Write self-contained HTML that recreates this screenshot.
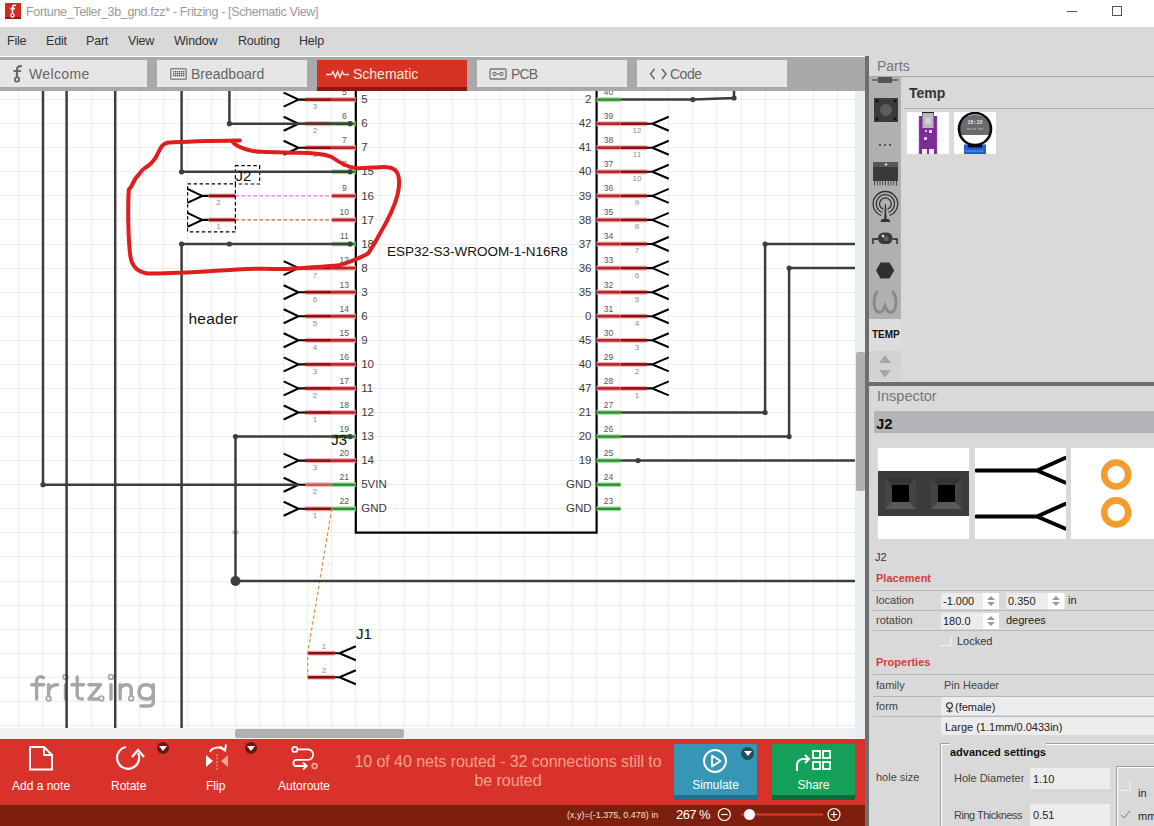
<!DOCTYPE html>
<html><head><meta charset="utf-8">
<style>
html,body{margin:0;padding:0;}
body{width:1154px;height:826px;overflow:hidden;position:relative;background:#fff;font-family:"Liberation Sans",sans-serif;}
.a{position:absolute;}
.t{position:absolute;white-space:nowrap;line-height:1;}
</style></head>
<body>
<!-- title bar -->
<div class="a" style="left:0;top:0;width:1154px;height:27px;background:#fff;"></div>
<div class="a" style="left:5px;top:3px;width:16px;height:16px;background:#d22a20;box-shadow:inset 0 -2px 0 #8e1a10;"></div>
<svg class="a" style="left:5px;top:3px" width="16" height="16" viewBox="0 0 16 16"><path d="M11 2.6C9.3 1.9 7.5 2.6 7.5 4.6V10.5M5.5 5.6H10" stroke="#fff" stroke-width="1.6" fill="none"/><circle cx="7.5" cy="12.4" r="1.6" stroke="#fff" stroke-width="1.3" fill="#5a0a06"/></svg>
<div class="t" style="left:26px;top:6px;font-size:12.5px;letter-spacing:-0.35px;color:#9a9a9a;">Fortune_Teller_3b_gnd.fzz* - Fritzing - [Schematic View]</div>
<div class="a" style="left:1067px;top:11px;width:10px;height:1px;background:#555;"></div>
<div class="a" style="left:1112px;top:6px;width:8px;height:8px;border:1px solid #555;"></div>

<!-- menu bar -->
<div class="a" style="left:0;top:27px;width:1154px;height:29px;background:#d9d9d9;"></div>
<div class="t" style="left:7px;top:35px;font-size:12.5px;letter-spacing:-0.2px;color:#333;">File</div>
<div class="t" style="left:46px;top:35px;font-size:12.5px;letter-spacing:-0.2px;color:#333;">Edit</div>
<div class="t" style="left:86px;top:35px;font-size:12.5px;letter-spacing:-0.2px;color:#333;">Part</div>
<div class="t" style="left:128px;top:35px;font-size:12.5px;letter-spacing:-0.2px;color:#333;">View</div>
<div class="t" style="left:174px;top:35px;font-size:12.5px;letter-spacing:-0.2px;color:#333;">Window</div>
<div class="t" style="left:238px;top:35px;font-size:12.5px;letter-spacing:-0.2px;color:#333;">Routing</div>
<div class="t" style="left:299px;top:35px;font-size:12.5px;letter-spacing:-0.2px;color:#333;">Help</div>

<!-- tab strip -->
<div class="a" style="left:0;top:56px;width:797px;height:1px;background:#fff;"></div>
<div class="a" style="left:0;top:57px;width:865px;height:34px;background:#a9a9a9;"></div>
<div class="a" style="left:0;top:60px;width:147px;height:27px;background:#e6e6e6;"></div>
<div class="a" style="left:157px;top:60px;width:150px;height:27px;background:#e6e6e6;"></div>
<div class="a" style="left:317px;top:60px;width:150px;height:27px;background:#d63324;"></div>
<div class="a" style="left:317px;top:87px;width:150px;height:4px;background:#8a1a0c;"></div>
<div class="a" style="left:477px;top:60px;width:150px;height:27px;background:#e6e6e6;"></div>
<div class="a" style="left:637px;top:60px;width:150px;height:27px;background:#e6e6e6;"></div>
<!-- tab icons -->
<svg class="a" style="left:10px;top:64px" width="16" height="20" viewBox="0 0 16 20"><path d="M12 2.5C9.5 1.5 7 2.5 7 5.5V13M3.5 7H11" stroke="#666" stroke-width="2.2" fill="none"/><circle cx="7" cy="15.5" r="2.2" stroke="#666" stroke-width="1.8" fill="none"/></svg>
<div class="t" style="left:29px;top:67px;font-size:14px;letter-spacing:0.35px;color:#666;">Welcome</div>
<svg class="a" style="left:170px;top:68px" width="17" height="12" viewBox="0 0 17 12"><rect x="0.8" y="0.8" width="15.4" height="10.4" rx="0.8" stroke="#8a8a8a" stroke-width="1.5" fill="#eee"/><rect x="3" y="3" width="1.4" height="1.4" fill="#555"/><rect x="5" y="3" width="1.4" height="1.4" fill="#555"/><rect x="7" y="3" width="1.4" height="1.4" fill="#555"/><rect x="9" y="3" width="1.4" height="1.4" fill="#555"/><rect x="11" y="3" width="1.4" height="1.4" fill="#555"/><rect x="13" y="3" width="1.4" height="1.4" fill="#555"/><rect x="3" y="5" width="1.4" height="1.4" fill="#555"/><rect x="5" y="5" width="1.4" height="1.4" fill="#555"/><rect x="7" y="5" width="1.4" height="1.4" fill="#555"/><rect x="9" y="5" width="1.4" height="1.4" fill="#555"/><rect x="11" y="5" width="1.4" height="1.4" fill="#555"/><rect x="13" y="5" width="1.4" height="1.4" fill="#555"/><rect x="3" y="7" width="1.4" height="1.4" fill="#555"/><rect x="5" y="7" width="1.4" height="1.4" fill="#555"/><rect x="7" y="7" width="1.4" height="1.4" fill="#555"/><rect x="9" y="7" width="1.4" height="1.4" fill="#555"/><rect x="11" y="7" width="1.4" height="1.4" fill="#555"/><rect x="13" y="7" width="1.4" height="1.4" fill="#555"/></svg>
<div class="t" style="left:191px;top:67px;font-size:14px;color:#666;">Breadboard</div>
<svg class="a" style="left:326px;top:68px" width="23" height="11" viewBox="0 0 23 11"><path d="M0 6.5H5.5L7 3.5L9.3 9.5L11.6 3.5L13.9 9.5L16.2 3.5L17.7 6.5H23" stroke="#fde2d9" stroke-width="1.4" fill="none"/></svg>
<div class="t" style="left:353px;top:67px;font-size:14px;color:#fde6df;">Schematic</div>
<svg class="a" style="left:489px;top:68px" width="18" height="12" viewBox="0 0 18 12"><rect x="1" y="1" width="16" height="10" rx="1" stroke="#777" stroke-width="1.3" fill="none"/><circle cx="5.5" cy="6" r="1.6" stroke="#777" stroke-width="1.1" fill="none"/><circle cx="12.5" cy="6" r="1.6" stroke="#777" stroke-width="1.1" fill="none"/><path d="M7 6H11" stroke="#777" stroke-width="1.1"/></svg>
<div class="t" style="left:511px;top:67px;font-size:14px;letter-spacing:-0.9px;color:#666;">PCB</div>
<svg class="a" style="left:649px;top:67px" width="20" height="14" viewBox="0 0 20 14"><path d="M5.5 2L1.5 7L5.5 12M13 2L17 7L13 12" stroke="#666" stroke-width="1.5" fill="none"/></svg>
<div class="t" style="left:670px;top:67px;font-size:14px;letter-spacing:-0.5px;color:#666;">Code</div>

<!-- canvas -->
<div class="a" style="left:0;top:91px;width:855px;height:638px;background:#fff;"></div>
<svg class="a" style="left:0;top:0;" width="865" height="740" viewBox="0 0 865 740" font-family="Liberation Sans, sans-serif">
<defs><clipPath id="cc"><rect x="0" y="91" width="855" height="638"/></clipPath></defs>
<g clip-path="url(#cc)">
<path d="M18.5 91V729 M42.5 91V729 M67.5 91V729 M91.5 91V729 M115.5 91V729 M139.5 91V729 M163.5 91V729 M187.5 91V729 M211.5 91V729 M235.5 91V729 M259.5 91V729 M283.5 91V729 M307.5 91V729 M331.5 91V729 M355.5 91V729 M379.5 91V729 M404.5 91V729 M428.5 91V729 M452.5 91V729 M476.5 91V729 M500.5 91V729 M524.5 91V729 M548.5 91V729 M572.5 91V729 M596.5 91V729 M620.5 91V729 M644.5 91V729 M668.5 91V729 M692.5 91V729 M716.5 91V729 M741.5 91V729 M765.5 91V729 M789.5 91V729 M813.5 91V729 M837.5 91V729 M0 99.5H855 M0 123.5H855 M0 147.5H855 M0 171.5H855 M0 195.5H855 M0 219.5H855 M0 244.5H855 M0 268.5H855 M0 292.5H855 M0 316.5H855 M0 340.5H855 M0 364.5H855 M0 388.5H855 M0 412.5H855 M0 436.5H855 M0 460.5H855 M0 484.5H855 M0 508.5H855 M0 532.5H855 M0 556.5H855 M0 581.5H855 M0 605.5H855 M0 629.5H855 M0 653.5H855 M0 677.5H855 M0 701.5H855 M0 725.5H855" stroke="#eeeeee" stroke-width="1" fill="none"/>
<path d="M355.8 91V532.7H596.6V91" stroke="#000" stroke-width="2.2" fill="none"/>
<path d="M283.7 92.6L298.5 99.6L283.7 106.6M298.5 99.6H305.0" stroke="#000" stroke-width="2.1" fill="none"/>
<path d="M305.0 99.6H331.8" stroke="#f6b0b0" stroke-width="5"/>
<path d="M305.0 99.6H331.8" stroke="#8a0c10" stroke-width="2.6"/>
<path d="M331.8 99.6H355.8" stroke="#f6b0b0" stroke-width="5"/>
<path d="M331.8 99.6H355.8" stroke="#b3262b" stroke-width="2.6"/>
<path d="M283.7 116.7L298.5 123.7L283.7 130.7M298.5 123.7H305.0" stroke="#000" stroke-width="2.1" fill="none"/>
<path d="M305.0 123.7H331.8" stroke="#f6b0b0" stroke-width="5"/>
<path d="M305.0 123.7H331.8" stroke="#8a0c10" stroke-width="2.6"/>
<path d="M331.8 123.7H355.8" stroke="#a2e2a2" stroke-width="4.8"/>
<path d="M331.8 123.7H355.8" stroke="#2f8f2f" stroke-width="2.4"/>
<path d="M283.7 140.7L298.5 147.7L283.7 154.7M298.5 147.7H305.0" stroke="#000" stroke-width="2.1" fill="none"/>
<path d="M305.0 147.7H331.8" stroke="#f6b0b0" stroke-width="5"/>
<path d="M305.0 147.7H331.8" stroke="#8a0c10" stroke-width="2.6"/>
<path d="M331.8 147.7H355.8" stroke="#f6b0b0" stroke-width="5"/>
<path d="M331.8 147.7H355.8" stroke="#b3262b" stroke-width="2.6"/>
<path d="M331.8 171.8H355.8" stroke="#a2e2a2" stroke-width="4.8"/>
<path d="M331.8 171.8H355.8" stroke="#2f8f2f" stroke-width="2.4"/>
<path d="M331.8 195.9H355.8" stroke="#f6b0b0" stroke-width="5"/>
<path d="M331.8 195.9H355.8" stroke="#b3262b" stroke-width="2.6"/>
<path d="M331.8 219.9H355.8" stroke="#f6b0b0" stroke-width="5"/>
<path d="M331.8 219.9H355.8" stroke="#b3262b" stroke-width="2.6"/>
<path d="M331.8 244.0H355.8" stroke="#a2e2a2" stroke-width="4.8"/>
<path d="M331.8 244.0H355.8" stroke="#2f8f2f" stroke-width="2.4"/>
<path d="M283.7 261.1L298.5 268.1L283.7 275.1M298.5 268.1H305.0" stroke="#000" stroke-width="2.1" fill="none"/>
<path d="M305.0 268.1H331.8" stroke="#f6b0b0" stroke-width="5"/>
<path d="M305.0 268.1H331.8" stroke="#8a0c10" stroke-width="2.6"/>
<path d="M331.8 268.1H355.8" stroke="#f6b0b0" stroke-width="5"/>
<path d="M331.8 268.1H355.8" stroke="#b3262b" stroke-width="2.6"/>
<path d="M283.7 285.2L298.5 292.2L283.7 299.2M298.5 292.2H305.0" stroke="#000" stroke-width="2.1" fill="none"/>
<path d="M305.0 292.2H331.8" stroke="#f6b0b0" stroke-width="5"/>
<path d="M305.0 292.2H331.8" stroke="#8a0c10" stroke-width="2.6"/>
<path d="M331.8 292.2H355.8" stroke="#f6b0b0" stroke-width="5"/>
<path d="M331.8 292.2H355.8" stroke="#b3262b" stroke-width="2.6"/>
<path d="M283.7 309.2L298.5 316.2L283.7 323.2M298.5 316.2H305.0" stroke="#000" stroke-width="2.1" fill="none"/>
<path d="M305.0 316.2H331.8" stroke="#f6b0b0" stroke-width="5"/>
<path d="M305.0 316.2H331.8" stroke="#8a0c10" stroke-width="2.6"/>
<path d="M331.8 316.2H355.8" stroke="#f6b0b0" stroke-width="5"/>
<path d="M331.8 316.2H355.8" stroke="#b3262b" stroke-width="2.6"/>
<path d="M283.7 333.3L298.5 340.3L283.7 347.3M298.5 340.3H305.0" stroke="#000" stroke-width="2.1" fill="none"/>
<path d="M305.0 340.3H331.8" stroke="#f6b0b0" stroke-width="5"/>
<path d="M305.0 340.3H331.8" stroke="#8a0c10" stroke-width="2.6"/>
<path d="M331.8 340.3H355.8" stroke="#f6b0b0" stroke-width="5"/>
<path d="M331.8 340.3H355.8" stroke="#b3262b" stroke-width="2.6"/>
<path d="M283.7 357.4L298.5 364.4L283.7 371.4M298.5 364.4H305.0" stroke="#000" stroke-width="2.1" fill="none"/>
<path d="M305.0 364.4H331.8" stroke="#f6b0b0" stroke-width="5"/>
<path d="M305.0 364.4H331.8" stroke="#8a0c10" stroke-width="2.6"/>
<path d="M331.8 364.4H355.8" stroke="#f6b0b0" stroke-width="5"/>
<path d="M331.8 364.4H355.8" stroke="#b3262b" stroke-width="2.6"/>
<path d="M283.7 381.4L298.5 388.4L283.7 395.4M298.5 388.4H305.0" stroke="#000" stroke-width="2.1" fill="none"/>
<path d="M305.0 388.4H331.8" stroke="#f6b0b0" stroke-width="5"/>
<path d="M305.0 388.4H331.8" stroke="#8a0c10" stroke-width="2.6"/>
<path d="M331.8 388.4H355.8" stroke="#f6b0b0" stroke-width="5"/>
<path d="M331.8 388.4H355.8" stroke="#b3262b" stroke-width="2.6"/>
<path d="M283.7 405.5L298.5 412.5L283.7 419.5M298.5 412.5H305.0" stroke="#000" stroke-width="2.1" fill="none"/>
<path d="M305.0 412.5H331.8" stroke="#f6b0b0" stroke-width="5"/>
<path d="M305.0 412.5H331.8" stroke="#8a0c10" stroke-width="2.6"/>
<path d="M331.8 412.5H355.8" stroke="#f6b0b0" stroke-width="5"/>
<path d="M331.8 412.5H355.8" stroke="#b3262b" stroke-width="2.6"/>
<path d="M331.8 436.6H355.8" stroke="#a2e2a2" stroke-width="4.8"/>
<path d="M331.8 436.6H355.8" stroke="#2f8f2f" stroke-width="2.4"/>
<path d="M283.7 453.6L298.5 460.6L283.7 467.6M298.5 460.6H305.0" stroke="#000" stroke-width="2.1" fill="none"/>
<path d="M305.0 460.6H331.8" stroke="#f6b0b0" stroke-width="5"/>
<path d="M305.0 460.6H331.8" stroke="#8a0c10" stroke-width="2.6"/>
<path d="M331.8 460.6H355.8" stroke="#f6b0b0" stroke-width="5"/>
<path d="M331.8 460.6H355.8" stroke="#b3262b" stroke-width="2.6"/>
<path d="M283.7 477.7L298.5 484.7L283.7 491.7M298.5 484.7H305.0" stroke="#000" stroke-width="2.1" fill="none"/>
<path d="M305.0 484.7H331.8" stroke="#f2c4c4" stroke-width="5"/>
<path d="M305.0 484.7H331.8" stroke="#c85a5a" stroke-width="2.6"/>
<path d="M331.8 484.7H355.8" stroke="#a2e2a2" stroke-width="4.8"/>
<path d="M331.8 484.7H355.8" stroke="#2f8f2f" stroke-width="2.4"/>
<path d="M283.7 501.8L298.5 508.8L283.7 515.8M298.5 508.8H305.0" stroke="#000" stroke-width="2.1" fill="none"/>
<path d="M305.0 508.8H331.8" stroke="#f6b0b0" stroke-width="5"/>
<path d="M305.0 508.8H331.8" stroke="#8a0c10" stroke-width="2.6"/>
<path d="M331.8 508.8H355.8" stroke="#a2e2a2" stroke-width="4.8"/>
<path d="M331.8 508.8H355.8" stroke="#2f8f2f" stroke-width="2.4"/>
<path d="M596.6 99.6H620.6" stroke="#a2e2a2" stroke-width="4.8"/>
<path d="M596.6 99.6H620.6" stroke="#2f8f2f" stroke-width="2.4"/>
<path d="M668.8 116.7L652.3 123.7L668.8 130.7M652.3 123.7H646.3" stroke="#000" stroke-width="2.1" fill="none"/>
<path d="M620.6 123.7H647.0" stroke="#f6b0b0" stroke-width="5"/>
<path d="M620.6 123.7H647.0" stroke="#8a0c10" stroke-width="2.6"/>
<path d="M596.6 123.7H620.6" stroke="#f6b0b0" stroke-width="5"/>
<path d="M596.6 123.7H620.6" stroke="#b3262b" stroke-width="2.6"/>
<path d="M668.8 140.7L652.3 147.7L668.8 154.7M652.3 147.7H646.3" stroke="#000" stroke-width="2.1" fill="none"/>
<path d="M620.6 147.7H647.0" stroke="#f6b0b0" stroke-width="5"/>
<path d="M620.6 147.7H647.0" stroke="#8a0c10" stroke-width="2.6"/>
<path d="M596.6 147.7H620.6" stroke="#f6b0b0" stroke-width="5"/>
<path d="M596.6 147.7H620.6" stroke="#b3262b" stroke-width="2.6"/>
<path d="M668.8 164.8L652.3 171.8L668.8 178.8M652.3 171.8H646.3" stroke="#000" stroke-width="2.1" fill="none"/>
<path d="M620.6 171.8H647.0" stroke="#f6b0b0" stroke-width="5"/>
<path d="M620.6 171.8H647.0" stroke="#8a0c10" stroke-width="2.6"/>
<path d="M596.6 171.8H620.6" stroke="#f6b0b0" stroke-width="5"/>
<path d="M596.6 171.8H620.6" stroke="#b3262b" stroke-width="2.6"/>
<path d="M668.8 188.9L652.3 195.9L668.8 202.9M652.3 195.9H646.3" stroke="#000" stroke-width="2.1" fill="none"/>
<path d="M620.6 195.9H647.0" stroke="#f6b0b0" stroke-width="5"/>
<path d="M620.6 195.9H647.0" stroke="#8a0c10" stroke-width="2.6"/>
<path d="M596.6 195.9H620.6" stroke="#f6b0b0" stroke-width="5"/>
<path d="M596.6 195.9H620.6" stroke="#b3262b" stroke-width="2.6"/>
<path d="M668.8 212.9L652.3 219.9L668.8 226.9M652.3 219.9H646.3" stroke="#000" stroke-width="2.1" fill="none"/>
<path d="M620.6 219.9H647.0" stroke="#f6b0b0" stroke-width="5"/>
<path d="M620.6 219.9H647.0" stroke="#8a0c10" stroke-width="2.6"/>
<path d="M596.6 219.9H620.6" stroke="#f6b0b0" stroke-width="5"/>
<path d="M596.6 219.9H620.6" stroke="#b3262b" stroke-width="2.6"/>
<path d="M668.8 237.0L652.3 244.0L668.8 251.0M652.3 244.0H646.3" stroke="#000" stroke-width="2.1" fill="none"/>
<path d="M620.6 244.0H647.0" stroke="#f6b0b0" stroke-width="5"/>
<path d="M620.6 244.0H647.0" stroke="#8a0c10" stroke-width="2.6"/>
<path d="M596.6 244.0H620.6" stroke="#f6b0b0" stroke-width="5"/>
<path d="M596.6 244.0H620.6" stroke="#b3262b" stroke-width="2.6"/>
<path d="M668.8 261.1L652.3 268.1L668.8 275.1M652.3 268.1H646.3" stroke="#000" stroke-width="2.1" fill="none"/>
<path d="M620.6 268.1H647.0" stroke="#f6b0b0" stroke-width="5"/>
<path d="M620.6 268.1H647.0" stroke="#8a0c10" stroke-width="2.6"/>
<path d="M596.6 268.1H620.6" stroke="#f6b0b0" stroke-width="5"/>
<path d="M596.6 268.1H620.6" stroke="#b3262b" stroke-width="2.6"/>
<path d="M668.8 285.2L652.3 292.2L668.8 299.2M652.3 292.2H646.3" stroke="#000" stroke-width="2.1" fill="none"/>
<path d="M620.6 292.2H647.0" stroke="#f6b0b0" stroke-width="5"/>
<path d="M620.6 292.2H647.0" stroke="#8a0c10" stroke-width="2.6"/>
<path d="M596.6 292.2H620.6" stroke="#f6b0b0" stroke-width="5"/>
<path d="M596.6 292.2H620.6" stroke="#b3262b" stroke-width="2.6"/>
<path d="M668.8 309.2L652.3 316.2L668.8 323.2M652.3 316.2H646.3" stroke="#000" stroke-width="2.1" fill="none"/>
<path d="M620.6 316.2H647.0" stroke="#f6b0b0" stroke-width="5"/>
<path d="M620.6 316.2H647.0" stroke="#8a0c10" stroke-width="2.6"/>
<path d="M596.6 316.2H620.6" stroke="#f6b0b0" stroke-width="5"/>
<path d="M596.6 316.2H620.6" stroke="#b3262b" stroke-width="2.6"/>
<path d="M668.8 333.3L652.3 340.3L668.8 347.3M652.3 340.3H646.3" stroke="#000" stroke-width="2.1" fill="none"/>
<path d="M620.6 340.3H647.0" stroke="#f6b0b0" stroke-width="5"/>
<path d="M620.6 340.3H647.0" stroke="#8a0c10" stroke-width="2.6"/>
<path d="M596.6 340.3H620.6" stroke="#f6b0b0" stroke-width="5"/>
<path d="M596.6 340.3H620.6" stroke="#b3262b" stroke-width="2.6"/>
<path d="M668.8 357.4L652.3 364.4L668.8 371.4M652.3 364.4H646.3" stroke="#000" stroke-width="2.1" fill="none"/>
<path d="M620.6 364.4H647.0" stroke="#f6b0b0" stroke-width="5"/>
<path d="M620.6 364.4H647.0" stroke="#8a0c10" stroke-width="2.6"/>
<path d="M596.6 364.4H620.6" stroke="#f6b0b0" stroke-width="5"/>
<path d="M596.6 364.4H620.6" stroke="#b3262b" stroke-width="2.6"/>
<path d="M668.8 381.4L652.3 388.4L668.8 395.4M652.3 388.4H646.3" stroke="#000" stroke-width="2.1" fill="none"/>
<path d="M620.6 388.4H647.0" stroke="#f6b0b0" stroke-width="5"/>
<path d="M620.6 388.4H647.0" stroke="#8a0c10" stroke-width="2.6"/>
<path d="M596.6 388.4H620.6" stroke="#f6b0b0" stroke-width="5"/>
<path d="M596.6 388.4H620.6" stroke="#b3262b" stroke-width="2.6"/>
<path d="M596.6 412.5H620.6" stroke="#a2e2a2" stroke-width="4.8"/>
<path d="M596.6 412.5H620.6" stroke="#2f8f2f" stroke-width="2.4"/>
<path d="M596.6 436.6H620.6" stroke="#a2e2a2" stroke-width="4.8"/>
<path d="M596.6 436.6H620.6" stroke="#2f8f2f" stroke-width="2.4"/>
<path d="M596.6 460.6H620.6" stroke="#a2e2a2" stroke-width="4.8"/>
<path d="M596.6 460.6H620.6" stroke="#2f8f2f" stroke-width="2.4"/>
<path d="M596.6 484.7H620.6" stroke="#a2e2a2" stroke-width="4.8"/>
<path d="M596.6 484.7H620.6" stroke="#2f8f2f" stroke-width="2.4"/>
<path d="M596.6 508.8H620.6" stroke="#a2e2a2" stroke-width="4.8"/>
<path d="M596.6 508.8H620.6" stroke="#2f8f2f" stroke-width="2.4"/>
<path d="M187.4 188.9L202.2 195.9L187.4 202.9M202.2 195.9H208.7" stroke="#000" stroke-width="2.1" fill="none"/>
<path d="M208.7 195.9H235.5" stroke="#f6b0b0" stroke-width="5"/>
<path d="M208.7 195.9H235.5" stroke="#8a0c10" stroke-width="2.6"/>
<path d="M187.4 212.9L202.2 219.9L187.4 226.9M202.2 219.9H208.7" stroke="#000" stroke-width="2.1" fill="none"/>
<path d="M208.7 219.9H235.5" stroke="#f6b0b0" stroke-width="5"/>
<path d="M208.7 219.9H235.5" stroke="#8a0c10" stroke-width="2.6"/>
<path d="M355.9 646.2L339.4 653.2L355.9 660.2M339.4 653.2H333.4" stroke="#000" stroke-width="2.1" fill="none"/>
<path d="M307.7 653.2H334.8" stroke="#f6b0b0" stroke-width="5"/>
<path d="M307.7 653.2H334.8" stroke="#8a0c10" stroke-width="2.6"/>
<path d="M355.9 670.3L339.4 677.3L355.9 684.3M339.4 677.3H333.4" stroke="#000" stroke-width="2.1" fill="none"/>
<path d="M307.7 677.3H334.8" stroke="#f6b0b0" stroke-width="5"/>
<path d="M307.7 677.3H334.8" stroke="#8a0c10" stroke-width="2.6"/>
<path d="M235.5 195.9H331.8" stroke="#d67ee6" stroke-width="1.2" stroke-dasharray="3.5 2.5"/>
<path d="M235.5 219.9H331.8" stroke="#b0703a" stroke-width="1.2" stroke-dasharray="3.5 2.5"/>
<path d="M331.8 508.8L307.7 653.2V677.3" stroke="#f08a2a" stroke-width="1.2" stroke-dasharray="3.5 2.5" fill="none"/>
<path d="M232.5 532.5H238.5" stroke="#7ad87a" stroke-width="3" opacity="0.9"/>
<rect x="187.6" y="183.8" width="47.8" height="48.1" fill="none" stroke="#000" stroke-width="1.2" stroke-dasharray="3.4 2.6"/>
<rect x="235.4" y="165.7" width="24.2" height="18.3" fill="none" stroke="#000" stroke-width="1.2" stroke-dasharray="3.4 2.6"/>
<path d="M43.5 677.5C40 676 36.6 677 36.6 681V699M31.7 684.7H44 M48.6 684.7V696.2M48.6 691C49.5 686.5 53 684.7 57.7 684.7 M65.5 684.7V699 M77.2 677V695C77.2 698 78.5 699 82.4 699M72 684.7H83.7 M88.9 684.7H100.6L88.9 699H99 M111 684.7V699 M120.1 684.7V699M120.1 689.5C121 686 124 684.7 126.5 684.7C129.5 684.7 131.2 686.5 131.2 690V696.2 M153.3 684.7V702C153.3 705 151.5 706 148 706H141 M153.3 690C152.5 686 150 684.7 146.5 684.7C141.5 684.7 139 687.5 139 692C139 696.5 141.5 699 146.5 699C150 699 152.5 697.5 153.3 694" stroke="#a6a6a6" stroke-width="3.4" fill="none" stroke-linecap="round" stroke-linejoin="round"/>
<circle cx="48.6" cy="698.6" r="2.3" stroke="#a8a8a8" stroke-width="1.8" fill="#fff"/>
<circle cx="65.5" cy="676.9" r="2.3" stroke="#a8a8a8" stroke-width="1.8" fill="#fff"/>
<circle cx="101.3" cy="698.4" r="2.3" stroke="#a8a8a8" stroke-width="1.8" fill="#fff"/>
<circle cx="111" cy="676.9" r="2.3" stroke="#a8a8a8" stroke-width="1.8" fill="#fff"/>
<circle cx="131.2" cy="698.4" r="2.3" stroke="#a8a8a8" stroke-width="1.8" fill="#fff"/>
<path d="M43.0 91V484.7H299" stroke="#3d3d3d" stroke-width="2.5" fill="none" stroke-linecap="butt"/>
<circle cx="43.0" cy="484.7" r="2.6" fill="#3d3d3d"/>
<path d="M66.6 91V729" stroke="#3d3d3d" stroke-width="2.5" fill="none" stroke-linecap="butt"/>
<path d="M115.2 91V729" stroke="#3d3d3d" stroke-width="2.5" fill="none" stroke-linecap="butt"/>
<path d="M181.6 91V171.8H350" stroke="#3d3d3d" stroke-width="2.5" fill="none" stroke-linecap="butt"/>
<circle cx="181.6" cy="171.8" r="2.6" fill="#3d3d3d"/>
<circle cx="350.0" cy="171.8" r="2.6" fill="#3d3d3d"/>
<path d="M181.6 729V244.0H350" stroke="#3d3d3d" stroke-width="2.5" fill="none" stroke-linecap="butt"/>
<circle cx="181.6" cy="244.0" r="2.6" fill="#3d3d3d"/>
<circle cx="229.4" cy="244.0" r="2.6" fill="#3d3d3d"/>
<circle cx="350.0" cy="244.0" r="2.6" fill="#3d3d3d"/>
<path d="M229.4 91V123.7H350" stroke="#3d3d3d" stroke-width="2.5" fill="none" stroke-linecap="butt"/>
<circle cx="229.4" cy="123.7" r="2.6" fill="#3d3d3d"/>
<circle cx="350.0" cy="123.7" r="2.6" fill="#3d3d3d"/>
<path d="M235.5 436.6H350" stroke="#3d3d3d" stroke-width="2.5" fill="none" stroke-linecap="butt"/>
<circle cx="235.5" cy="436.6" r="2.6" fill="#3d3d3d"/>
<circle cx="350.0" cy="436.6" r="2.6" fill="#3d3d3d"/>
<path d="M235.5 436.6V581.0H855" stroke="#3d3d3d" stroke-width="2.5" fill="none" stroke-linecap="butt"/>
<circle cx="235.5" cy="581.0" r="5" fill="#3d3d3d"/>
<path d="M620.6 99.6H692.9L734 98V91" stroke="#3d3d3d" stroke-width="2.5" fill="none" stroke-linecap="butt"/>
<circle cx="692.9" cy="99.6" r="2.6" fill="#3d3d3d"/>
<circle cx="734.0" cy="98.0" r="2.6" fill="#3d3d3d"/>
<path d="M620.6 412.5H765.1V244.0H855" stroke="#3d3d3d" stroke-width="2.5" fill="none" stroke-linecap="butt"/>
<circle cx="765.1" cy="412.5" r="2.6" fill="#3d3d3d"/>
<circle cx="765.1" cy="244.0" r="2.6" fill="#3d3d3d"/>
<path d="M620.6 436.6H789.1V268.1H855" stroke="#3d3d3d" stroke-width="2.5" fill="none" stroke-linecap="butt"/>
<circle cx="789.1" cy="436.6" r="2.6" fill="#3d3d3d"/>
<circle cx="789.1" cy="268.1" r="2.6" fill="#3d3d3d"/>
<path d="M620.6 460.6H855" stroke="#3d3d3d" stroke-width="2.5" fill="none" stroke-linecap="butt"/>
<circle cx="638.0" cy="460.6" r="2.6" fill="#3d3d3d"/>
<text x="361.2" y="103.2" font-size="11.5" fill="#3a3a3a" text-anchor="start" font-weight="normal" >5</text>
<text x="344.3" y="94.9" font-size="8.5" fill="#555" text-anchor="middle" font-weight="normal" >5</text>
<text x="315.0" y="109.0" font-size="8" fill="#8c8c8c" text-anchor="middle" font-weight="normal" >3</text>
<text x="361.2" y="127.3" font-size="11.5" fill="#3a3a3a" text-anchor="start" font-weight="normal" >6</text>
<text x="344.3" y="119.0" font-size="8.5" fill="#555" text-anchor="middle" font-weight="normal" >6</text>
<text x="315.0" y="133.1" font-size="8" fill="#8c8c8c" text-anchor="middle" font-weight="normal" >2</text>
<text x="361.2" y="151.3" font-size="11.5" fill="#3a3a3a" text-anchor="start" font-weight="normal" >7</text>
<text x="344.3" y="143.0" font-size="8.5" fill="#555" text-anchor="middle" font-weight="normal" >7</text>
<text x="315.0" y="157.1" font-size="8" fill="#8c8c8c" text-anchor="middle" font-weight="normal" >1</text>
<text x="361.2" y="175.4" font-size="11.5" fill="#3a3a3a" text-anchor="start" font-weight="normal" >15</text>
<text x="344.3" y="167.1" font-size="8.5" fill="#555" text-anchor="middle" font-weight="normal" >8</text>
<text x="361.2" y="199.5" font-size="11.5" fill="#3a3a3a" text-anchor="start" font-weight="normal" >16</text>
<text x="344.3" y="191.2" font-size="8.5" fill="#555" text-anchor="middle" font-weight="normal" >9</text>
<text x="361.2" y="223.5" font-size="11.5" fill="#3a3a3a" text-anchor="start" font-weight="normal" >17</text>
<text x="344.3" y="215.2" font-size="8.5" fill="#555" text-anchor="middle" font-weight="normal" >10</text>
<text x="361.2" y="247.6" font-size="11.5" fill="#3a3a3a" text-anchor="start" font-weight="normal" >18</text>
<text x="344.3" y="239.3" font-size="8.5" fill="#555" text-anchor="middle" font-weight="normal" >11</text>
<text x="361.2" y="271.7" font-size="11.5" fill="#3a3a3a" text-anchor="start" font-weight="normal" >8</text>
<text x="344.3" y="263.4" font-size="8.5" fill="#555" text-anchor="middle" font-weight="normal" >12</text>
<text x="315.0" y="277.5" font-size="8" fill="#8c8c8c" text-anchor="middle" font-weight="normal" >7</text>
<text x="361.2" y="295.8" font-size="11.5" fill="#3a3a3a" text-anchor="start" font-weight="normal" >3</text>
<text x="344.3" y="287.5" font-size="8.5" fill="#555" text-anchor="middle" font-weight="normal" >13</text>
<text x="315.0" y="301.6" font-size="8" fill="#8c8c8c" text-anchor="middle" font-weight="normal" >6</text>
<text x="361.2" y="319.8" font-size="11.5" fill="#3a3a3a" text-anchor="start" font-weight="normal" >6</text>
<text x="344.3" y="311.5" font-size="8.5" fill="#555" text-anchor="middle" font-weight="normal" >14</text>
<text x="315.0" y="325.6" font-size="8" fill="#8c8c8c" text-anchor="middle" font-weight="normal" >5</text>
<text x="361.2" y="343.9" font-size="11.5" fill="#3a3a3a" text-anchor="start" font-weight="normal" >9</text>
<text x="344.3" y="335.6" font-size="8.5" fill="#555" text-anchor="middle" font-weight="normal" >15</text>
<text x="315.0" y="349.7" font-size="8" fill="#8c8c8c" text-anchor="middle" font-weight="normal" >4</text>
<text x="361.2" y="368.0" font-size="11.5" fill="#3a3a3a" text-anchor="start" font-weight="normal" >10</text>
<text x="344.3" y="359.7" font-size="8.5" fill="#555" text-anchor="middle" font-weight="normal" >16</text>
<text x="315.0" y="373.8" font-size="8" fill="#8c8c8c" text-anchor="middle" font-weight="normal" >3</text>
<text x="361.2" y="392.0" font-size="11.5" fill="#3a3a3a" text-anchor="start" font-weight="normal" >11</text>
<text x="344.3" y="383.7" font-size="8.5" fill="#555" text-anchor="middle" font-weight="normal" >17</text>
<text x="315.0" y="397.8" font-size="8" fill="#8c8c8c" text-anchor="middle" font-weight="normal" >2</text>
<text x="361.2" y="416.1" font-size="11.5" fill="#3a3a3a" text-anchor="start" font-weight="normal" >12</text>
<text x="344.3" y="407.8" font-size="8.5" fill="#555" text-anchor="middle" font-weight="normal" >18</text>
<text x="315.0" y="421.9" font-size="8" fill="#8c8c8c" text-anchor="middle" font-weight="normal" >1</text>
<text x="361.2" y="440.2" font-size="11.5" fill="#3a3a3a" text-anchor="start" font-weight="normal" >13</text>
<text x="344.3" y="431.9" font-size="8.5" fill="#555" text-anchor="middle" font-weight="normal" >19</text>
<text x="361.2" y="464.2" font-size="11.5" fill="#3a3a3a" text-anchor="start" font-weight="normal" >14</text>
<text x="344.3" y="455.9" font-size="8.5" fill="#555" text-anchor="middle" font-weight="normal" >20</text>
<text x="315.0" y="470.0" font-size="8" fill="#8c8c8c" text-anchor="middle" font-weight="normal" >3</text>
<text x="361.2" y="488.3" font-size="11.5" fill="#3a3a3a" text-anchor="start" font-weight="normal" >5VIN</text>
<text x="344.3" y="480.0" font-size="8.5" fill="#555" text-anchor="middle" font-weight="normal" >21</text>
<text x="315.0" y="494.1" font-size="8" fill="#8c8c8c" text-anchor="middle" font-weight="normal" >2</text>
<text x="361.2" y="512.4" font-size="11.5" fill="#3a3a3a" text-anchor="start" font-weight="normal" >GND</text>
<text x="344.3" y="504.1" font-size="8.5" fill="#555" text-anchor="middle" font-weight="normal" >22</text>
<text x="315.0" y="518.2" font-size="8" fill="#8c8c8c" text-anchor="middle" font-weight="normal" >1</text>
<text x="591.5" y="103.2" font-size="11.5" fill="#3a3a3a" text-anchor="end" font-weight="normal" >2</text>
<text x="608.5" y="94.9" font-size="8.5" fill="#555" text-anchor="middle" font-weight="normal" >40</text>
<text x="591.5" y="127.3" font-size="11.5" fill="#3a3a3a" text-anchor="end" font-weight="normal" >42</text>
<text x="608.5" y="119.0" font-size="8.5" fill="#555" text-anchor="middle" font-weight="normal" >39</text>
<text x="637.0" y="133.1" font-size="8" fill="#8c8c8c" text-anchor="middle" font-weight="normal" >12</text>
<text x="591.5" y="151.3" font-size="11.5" fill="#3a3a3a" text-anchor="end" font-weight="normal" >41</text>
<text x="608.5" y="143.0" font-size="8.5" fill="#555" text-anchor="middle" font-weight="normal" >38</text>
<text x="637.0" y="157.1" font-size="8" fill="#8c8c8c" text-anchor="middle" font-weight="normal" >11</text>
<text x="591.5" y="175.4" font-size="11.5" fill="#3a3a3a" text-anchor="end" font-weight="normal" >40</text>
<text x="608.5" y="167.1" font-size="8.5" fill="#555" text-anchor="middle" font-weight="normal" >37</text>
<text x="637.0" y="181.2" font-size="8" fill="#8c8c8c" text-anchor="middle" font-weight="normal" >10</text>
<text x="591.5" y="199.5" font-size="11.5" fill="#3a3a3a" text-anchor="end" font-weight="normal" >39</text>
<text x="608.5" y="191.2" font-size="8.5" fill="#555" text-anchor="middle" font-weight="normal" >36</text>
<text x="637.0" y="205.3" font-size="8" fill="#8c8c8c" text-anchor="middle" font-weight="normal" >9</text>
<text x="591.5" y="223.5" font-size="11.5" fill="#3a3a3a" text-anchor="end" font-weight="normal" >38</text>
<text x="608.5" y="215.2" font-size="8.5" fill="#555" text-anchor="middle" font-weight="normal" >35</text>
<text x="637.0" y="229.3" font-size="8" fill="#8c8c8c" text-anchor="middle" font-weight="normal" >8</text>
<text x="591.5" y="247.6" font-size="11.5" fill="#3a3a3a" text-anchor="end" font-weight="normal" >37</text>
<text x="608.5" y="239.3" font-size="8.5" fill="#555" text-anchor="middle" font-weight="normal" >34</text>
<text x="637.0" y="253.4" font-size="8" fill="#8c8c8c" text-anchor="middle" font-weight="normal" >7</text>
<text x="591.5" y="271.7" font-size="11.5" fill="#3a3a3a" text-anchor="end" font-weight="normal" >36</text>
<text x="608.5" y="263.4" font-size="8.5" fill="#555" text-anchor="middle" font-weight="normal" >33</text>
<text x="637.0" y="277.5" font-size="8" fill="#8c8c8c" text-anchor="middle" font-weight="normal" >6</text>
<text x="591.5" y="295.8" font-size="11.5" fill="#3a3a3a" text-anchor="end" font-weight="normal" >35</text>
<text x="608.5" y="287.5" font-size="8.5" fill="#555" text-anchor="middle" font-weight="normal" >32</text>
<text x="637.0" y="301.6" font-size="8" fill="#8c8c8c" text-anchor="middle" font-weight="normal" >5</text>
<text x="591.5" y="319.8" font-size="11.5" fill="#3a3a3a" text-anchor="end" font-weight="normal" >0</text>
<text x="608.5" y="311.5" font-size="8.5" fill="#555" text-anchor="middle" font-weight="normal" >31</text>
<text x="637.0" y="325.6" font-size="8" fill="#8c8c8c" text-anchor="middle" font-weight="normal" >4</text>
<text x="591.5" y="343.9" font-size="11.5" fill="#3a3a3a" text-anchor="end" font-weight="normal" >45</text>
<text x="608.5" y="335.6" font-size="8.5" fill="#555" text-anchor="middle" font-weight="normal" >30</text>
<text x="637.0" y="349.7" font-size="8" fill="#8c8c8c" text-anchor="middle" font-weight="normal" >3</text>
<text x="591.5" y="368.0" font-size="11.5" fill="#3a3a3a" text-anchor="end" font-weight="normal" >40</text>
<text x="608.5" y="359.7" font-size="8.5" fill="#555" text-anchor="middle" font-weight="normal" >29</text>
<text x="637.0" y="373.8" font-size="8" fill="#8c8c8c" text-anchor="middle" font-weight="normal" >2</text>
<text x="591.5" y="392.0" font-size="11.5" fill="#3a3a3a" text-anchor="end" font-weight="normal" >47</text>
<text x="608.5" y="383.7" font-size="8.5" fill="#555" text-anchor="middle" font-weight="normal" >28</text>
<text x="637.0" y="397.8" font-size="8" fill="#8c8c8c" text-anchor="middle" font-weight="normal" >1</text>
<text x="591.5" y="416.1" font-size="11.5" fill="#3a3a3a" text-anchor="end" font-weight="normal" >21</text>
<text x="608.5" y="407.8" font-size="8.5" fill="#555" text-anchor="middle" font-weight="normal" >27</text>
<text x="591.5" y="440.2" font-size="11.5" fill="#3a3a3a" text-anchor="end" font-weight="normal" >20</text>
<text x="608.5" y="431.9" font-size="8.5" fill="#555" text-anchor="middle" font-weight="normal" >26</text>
<text x="591.5" y="464.2" font-size="11.5" fill="#3a3a3a" text-anchor="end" font-weight="normal" >19</text>
<text x="608.5" y="455.9" font-size="8.5" fill="#555" text-anchor="middle" font-weight="normal" >25</text>
<text x="591.5" y="488.3" font-size="11.5" fill="#3a3a3a" text-anchor="end" font-weight="normal" >GND</text>
<text x="608.5" y="480.0" font-size="8.5" fill="#555" text-anchor="middle" font-weight="normal" >24</text>
<text x="591.5" y="512.4" font-size="11.5" fill="#3a3a3a" text-anchor="end" font-weight="normal" >GND</text>
<text x="608.5" y="504.1" font-size="8.5" fill="#555" text-anchor="middle" font-weight="normal" >23</text>
<text x="218.4" y="205.3" font-size="8" fill="#8c8c8c" text-anchor="middle" font-weight="normal" >2</text>
<text x="218.4" y="229.3" font-size="8" fill="#8c8c8c" text-anchor="middle" font-weight="normal" >1</text>
<text x="324.0" y="648.7" font-size="8" fill="#8c8c8c" text-anchor="middle" font-weight="normal" >1</text>
<text x="324.0" y="672.8" font-size="8" fill="#8c8c8c" text-anchor="middle" font-weight="normal" >2</text>
<text x="235.5" y="181.2" font-size="15" fill="#111" text-anchor="start" font-weight="normal" >J2</text>
<text x="331.2" y="445.2" font-size="15" fill="#111" text-anchor="start" font-weight="normal" >J3</text>
<text x="356.0" y="638.5" font-size="15" fill="#111" text-anchor="start" font-weight="normal" >J1</text>
<text x="188.5" y="324.0" font-size="15.5" fill="#111" text-anchor="start" font-weight="normal" letter-spacing="0.25">header</text>
<text x="387.0" y="255.6" font-size="13.5" fill="#111" text-anchor="start" font-weight="normal" >ESP32-S3-WROOM-1-N16R8</text>
<path d="M239.9 140.5 C215 140.8 185 141.5 167.2 142.7 C161 144 160 150 156 157 C153 162 150 165 145 168 C142 169.5 141.5 171.5 140 173 C136 177 133.5 181 131.5 186 C130.5 188 129.5 188.5 128.8 189.5 C127.8 205 128 240 130.5 257 C132 266 138 272 147.2 273.5 C180 274 215 270.5 247 269 C265 268.5 280 269.2 288 268.9 C310 267.5 330 266.5 339 265.3 C350 262 360 258 368 253.5 C372 248 376 241 379 235.3 C388 220 395 205 397.5 195 C400 185 400 174 395 170 C390 166 382 167 379 167.2 C370 167.7 360 168.5 355.3 168.1 C347 167 340 163 331.7 157 C325 154 310 152.8 297.2 152.7 C285 152.4 270 152.2 261.7 151.8 C252 151.5 243 149 237 145.5 C233 143.5 232 141 233 140.5" stroke="#e11d1d" stroke-width="4" fill="none" stroke-linecap="round" stroke-linejoin="round"/>
</g>
</svg>
<!-- scrollbars -->
<div class="a" style="left:855px;top:91px;width:10px;height:648px;background:#e8edf0;"></div>
<div class="a" style="left:856px;top:352px;width:8.5px;height:139px;background:#b0b0b0;border-radius:2px;"></div>
<div class="a" style="left:0;top:728px;width:855px;height:11px;background:#eef2f4;"></div>
<div class="a" style="left:235px;top:729px;width:169px;height:9px;background:#b0b0b0;border-radius:2px;"></div>

<!-- bottom toolbar -->
<div class="a" style="left:0;top:739px;width:865px;height:66px;background:#d8322a;"></div>
<div class="a" style="left:0;top:805px;width:865px;height:21px;background:#7e1e0d;"></div>
<!-- add a note -->
<svg class="a" style="left:28px;top:745px" width="26" height="26" viewBox="0 0 26 26"><path d="M2 2H16L24 10V24.5H2Z M16 2V10H24" stroke="#fff" stroke-width="2" fill="none" stroke-linejoin="miter"/></svg>
<div class="t" style="left:12px;top:780px;font-size:12px;color:#fff;">Add a note</div>
<!-- rotate -->
<svg class="a" style="left:112px;top:744px" width="34" height="28" viewBox="0 0 34 28"><path d="M26 9A11 11 0 1 1 14 3" stroke="#fff" stroke-width="2.2" fill="none"/><path d="M20 13L26 6L32 13" stroke="#fff" stroke-width="2.2" fill="none"/></svg>
<div class="a" style="left:157px;top:742px;width:12px;height:12px;border-radius:6px;background:#6a1810;"></div>
<svg class="a" style="left:159px;top:746px" width="8" height="5" viewBox="0 0 8 5"><path d="M0 0H8L4 5Z" fill="#fff"/></svg>
<div class="t" style="left:111px;top:780px;font-size:12px;color:#fff;">Rotate</div>
<!-- flip -->
<svg class="a" style="left:203px;top:743px" width="30" height="30" viewBox="0 0 30 30"><path d="M3 12V24L10 18Z" fill="#fff"/><path d="M25 12V24L18 18Z" fill="#f4a090"/><path d="M14 11V27" stroke="#f4a090" stroke-width="1.2" stroke-dasharray="2 1.5"/><path d="M7 9C9 4 18 3 21 7" stroke="#fff" stroke-width="2" fill="none"/><path d="M17 3.5L22 7.5L23 1.5" stroke="#fff" stroke-width="2" fill="none"/></svg>
<div class="a" style="left:245px;top:742px;width:12px;height:12px;border-radius:6px;background:#6a1810;"></div>
<svg class="a" style="left:247px;top:746px" width="8" height="5" viewBox="0 0 8 5"><path d="M0 0H8L4 5Z" fill="#fff"/></svg>
<div class="t" style="left:206px;top:780px;font-size:12px;color:#fff;">Flip</div>
<!-- autoroute -->
<svg class="a" style="left:288px;top:744px" width="32" height="30" viewBox="288 744 32 30"><circle cx="294.8" cy="749.4" r="2.6" stroke="#fff" stroke-width="1.7" fill="none"/><path d="M297.4 749.4H308A5.2 5.2 0 0 1 308 759.8H296.5A3.1 3.1 0 0 0 296.5 766H306.5" stroke="#fff" stroke-width="1.8" fill="none"/><path d="M303 762.5L306.7 766L303 769.5" stroke="#fff" stroke-width="1.8" fill="none"/><circle cx="314.6" cy="766" r="2.4" stroke="#f4a090" stroke-width="1.7" fill="none"/></svg>
<div class="t" style="left:278px;top:780px;font-size:12px;color:#fff;">Autoroute</div>
<!-- status message -->
<div class="t" style="left:308px;top:752px;width:400px;text-align:center;font-size:16px;line-height:19px;letter-spacing:-0.05px;color:#f5a08e;">10 of 40 nets routed - 32 connections still to<br>be routed</div>
<!-- simulate -->
<div class="a" style="left:674px;top:744px;width:83px;height:55px;background:#3597b5;"></div>
<div class="a" style="left:674px;top:795px;width:83px;height:4.5px;background:#24708c;"></div>
<svg class="a" style="left:702px;top:748px" width="26" height="26" viewBox="0 0 26 26"><circle cx="13" cy="13" r="11" stroke="#fff" stroke-width="2" fill="none"/><path d="M10 7.5V18.5L18.5 13Z" stroke="#fff" stroke-width="1.8" fill="none" stroke-linejoin="round"/></svg>
<div class="a" style="left:741px;top:747px;width:13px;height:13px;border-radius:7px;background:#1f4f5e;"></div>
<svg class="a" style="left:743.5px;top:751px" width="8" height="5" viewBox="0 0 8 5"><path d="M0 0H8L4 5Z" fill="#fff"/></svg>
<div class="t" style="left:674px;top:779px;width:83px;text-align:center;font-size:12px;color:#fff;">Simulate</div>
<!-- share -->
<div class="a" style="left:772px;top:744px;width:83px;height:55px;background:#16a15a;"></div>
<div class="a" style="left:772px;top:795px;width:83px;height:4.5px;background:#0c6c3a;"></div>
<svg class="a" style="left:794px;top:749px" width="38" height="24" viewBox="0 0 38 24"><path d="M3 22V16A6 6 0 0 1 9 10H14" stroke="#fff" stroke-width="2" fill="none"/><path d="M11 6L15 10L11 14" stroke="#fff" stroke-width="2" fill="none"/><rect x="19" y="2" width="7" height="7" stroke="#fff" stroke-width="1.8" fill="none"/><rect x="29" y="2" width="7" height="7" stroke="#fff" stroke-width="1.8" fill="none"/><rect x="19" y="13" width="7" height="7" stroke="#fff" stroke-width="1.8" fill="none"/><rect x="29" y="13" width="7" height="7" stroke="#fff" stroke-width="1.8" fill="none"/></svg>
<div class="t" style="left:772px;top:779px;width:83px;text-align:center;font-size:12px;color:#fff;">Share</div>
<!-- status bar -->
<div class="t" style="left:567px;top:811px;font-size:9px;color:#f4e0da;">(x,y)=(-1.375, 0.478) in</div>
<div class="t" style="left:676px;top:808px;font-size:13px;letter-spacing:-0.6px;color:#fff;">267 %</div>
<svg class="a" style="left:716px;top:806px" width="125" height="17" viewBox="0 0 125 17"><circle cx="8.3" cy="8.5" r="6" stroke="#fff" stroke-width="1.2" fill="none"/><path d="M5 8.5H11.6" stroke="#fff" stroke-width="1.2"/><path d="M25 8.5H107" stroke="#dc3a2a" stroke-width="2"/><circle cx="33.5" cy="8.5" r="5.5" fill="#fff"/><circle cx="118" cy="8.5" r="6" stroke="#fff" stroke-width="1.2" fill="none"/><path d="M114.7 8.5H121.3M118 5.2V11.8" stroke="#fff" stroke-width="1.2"/></svg>

<!-- right panel -->
<div class="a" style="left:865px;top:56px;width:4px;height:770px;background:#6e6e6e;"></div>
<div class="a" style="left:869px;top:56px;width:285px;height:326px;background:#d9d9d9;"></div>
<div class="t" style="left:877px;top:59px;font-size:14px;color:#777;">Parts</div>
<div class="a" style="left:869px;top:76px;width:285px;height:1px;background:#a8a8a8;"></div>
<div class="a" style="left:869px;top:77px;width:32px;height:242px;background:#b0b0b0;"></div>
<div class="a" style="left:869px;top:319px;width:32px;height:31px;background:#dddddd;"></div>
<div class="t" style="left:872px;top:330px;font-size:10px;font-weight:bold;color:#111;">TEMP</div>
<div class="a" style="left:869px;top:351px;width:32px;height:15px;background:#d2d2d2;"></div><div class="a" style="left:869px;top:366px;width:32px;height:15px;background:#d4d4d4;"></div>
<svg class="a" style="left:876px;top:353px" width="18" height="26" viewBox="0 0 18 26"><path d="M3 10L9 2L15 10Z M3 17L9 24.5L15 17Z" fill="#a6a6a6"/></svg>
<!-- sidebar icons -->
<svg class="a" style="left:869px;top:77px" width="32" height="242" viewBox="0 0 32 242">
<path d="M3 3H29" stroke="#444" stroke-width="1.2"/><rect x="9" y="0" width="14" height="6" fill="#555"/>
<rect x="5" y="21" width="24" height="24" fill="#3a3a3a"/><circle cx="17" cy="33" r="6" fill="#5c5c5c"/><circle cx="8" cy="24" r="1.4" fill="#111"/><circle cx="26" cy="24" r="1.4" fill="#111"/><circle cx="8" cy="42" r="1.4" fill="#111"/><circle cx="26" cy="42" r="1.4" fill="#111"/>
<circle cx="11" cy="68" r="1" fill="#333"/><circle cx="16" cy="68" r="1" fill="#333"/><circle cx="21" cy="68" r="1" fill="#333"/>
<rect x="4" y="85" width="25" height="5" fill="#575757"/><rect x="4" y="90" width="25" height="14" fill="#3a3a3a"/><circle cx="17" cy="87.5" r="1.2" fill="#ddd"/><path d="M5.50 104V108.5M8.25 104V108.5M11.00 104V108.5M13.75 104V108.5M16.50 104V108.5M19.25 104V108.5M22.00 104V108.5M24.75 104V108.5M27.50 104V108.5" stroke="#4a4a4a" stroke-width="1"/>
<path d="M12.19 138.36A12.3 12.3 0 1 1 20.61 138.36 M13.29 135.35A9.1 9.1 0 1 1 19.51 135.35 M14.38 132.34A5.9 5.9 0 1 1 18.42 132.34" stroke="#333" stroke-width="1.3" fill="none"/><path d="M15.9 127H16.9L17.6 142H15.2Z" fill="#333"/><path d="M13 142H19.8L21.6 145H11.2Z" fill="#333"/>
<path d="M4 167V162H9M23.5 162H28V167" stroke="#444" stroke-width="1.8" fill="none"/><rect x="9" y="155.5" width="14.5" height="11.5" rx="5.5" fill="#3a3a3a"/><circle cx="14" cy="159" r="1.3" fill="#e8e8e8"/><circle cx="17" cy="161.5" r="2.5" fill="#606060"/>
<path d="M7 193.5L11.5 185.4H20.5L25.2 193.5L20.5 201.5H11.5Z" fill="#303030"/>
<path d="M8.5 214C4 220 4 233 9 235C13 236.5 15 232 16 229C17 232 19 236.5 23 235C28 233 28 220 23.5 214" stroke="#8a8a8a" stroke-width="3" fill="none"/>
</svg>
<!-- Temp bin -->
<div class="t" style="left:909px;top:86px;font-size:14px;font-weight:bold;color:#333;">Temp</div>
<div class="a" style="left:904px;top:108px;width:250px;height:1px;background:#b0b0b0;"></div>
<div class="a" style="left:907px;top:112px;width:42px;height:42px;background:#fff;"></div>
<svg class="a" style="left:907px;top:112px" width="42" height="42" viewBox="0 0 42 42"><rect x="12" y="4" width="18" height="38" fill="#7a2c98"/><path d="M12 6V42M30 6V42" stroke="#a868c8" stroke-width="1.2" stroke-dasharray="1 1.2"/><rect x="15" y="0" width="12" height="4" fill="#222"/><rect x="15.5" y="1" width="11" height="15" fill="#b9b9b9"/><rect x="18" y="6" width="6" height="6" fill="#cfcfcf"/><rect x="18" y="18" width="2" height="2" fill="#d8b8e8"/><rect x="22" y="18" width="3" height="3" fill="#e8d8f0"/><rect x="17" y="25" width="3" height="3" fill="#e0c8ec"/><rect x="15" y="37" width="5" height="5" fill="#eee"/><rect x="22" y="37" width="5" height="5" fill="#eee"/></svg>
<div class="a" style="left:954px;top:112px;width:42px;height:42px;background:#fff;"></div>
<svg class="a" style="left:954px;top:112px" width="42" height="42" viewBox="0 0 42 42"><rect x="10" y="32.4" width="22" height="9.6" fill="#1f5fd0"/><path d="M12 39H30" stroke="#cfe0ff" stroke-width="1" stroke-dasharray="1 1.3"/><rect x="14" y="32.5" width="14" height="3" fill="#111"/><circle cx="21" cy="17" r="16" fill="#fff"/><path d="M5.6 23A16 16 0 1 1 36.4 23Z" fill="#6b6b6b"/><circle cx="21" cy="17" r="16" fill="none" stroke="#0a0a14" stroke-width="2.6"/><text x="21" y="11.5" font-size="5" fill="#eee" text-anchor="middle" font-family="Liberation Mono" font-weight="bold">15:32</text><text x="21" y="17.5" font-size="3" fill="#ccc" text-anchor="middle" font-family="Liberation Mono">03:10 Tue</text></svg>

<!-- splitter -->
<div class="a" style="left:869px;top:382px;width:285px;height:4px;background:#6e6e6e;"></div>
<!-- inspector -->
<div class="a" style="left:869px;top:386px;width:285px;height:440px;background:#d9d9d9;"></div>
<div class="t" style="left:877px;top:389px;font-size:14.5px;color:#777;">Inspector</div>
<div class="a" style="left:874px;top:411px;width:280px;height:22px;background:#b4b4b8;"></div>
<div class="t" style="left:876px;top:416px;font-size:15px;font-weight:bold;color:#111;">J2</div>
<!-- images -->
<div class="a" style="left:878px;top:448px;width:91px;height:91px;background:#fff;"></div>
<svg class="a" style="left:878px;top:448px" width="91" height="91" viewBox="0 0 91 91"><rect x="0" y="23" width="91" height="45" fill="#3c3c3c"/><path d="M7 30H38L31 37H14Z" fill="#353535"/><path d="M7 30L14 37V54L7 61Z" fill="#444"/><path d="M38 30L31 37V54L38 61Z" fill="#444"/><path d="M7 61L14 54H31L38 61Z" fill="#5a5a5a"/><path d="M14 37H31V54H14Z" fill="#000"/><path d="M53 30H84L77 37H60Z" fill="#353535"/><path d="M53 30L60 37V54L53 61Z" fill="#444"/><path d="M84 30L77 37V54L84 61Z" fill="#444"/><path d="M53 61L60 54H77L84 61Z" fill="#5a5a5a"/><path d="M60 37H77V54H60Z" fill="#000"/></svg>
<div class="a" style="left:975px;top:448px;width:91px;height:91px;background:#fff;"></div>
<svg class="a" style="left:975px;top:448px" width="91" height="91" viewBox="0 0 91 91"><path d="M1.5 22.5H62L90 10M62 22.5L90 34.5M1.5 68.5H62L90 56M62 68.5L90 80.5" stroke="#000" stroke-width="4" fill="none" stroke-linecap="round"/></svg>
<div class="a" style="left:1071px;top:448px;width:83px;height:91px;background:#fff;"></div>
<svg class="a" style="left:1071px;top:448px" width="83" height="91" viewBox="0 0 83 91"><circle cx="45.2" cy="26.5" r="12" stroke="#f59c30" stroke-width="6.6" fill="none"/><circle cx="45.2" cy="64.4" r="12" stroke="#f59c30" stroke-width="6.6" fill="none"/></svg>
<div class="t" style="left:875px;top:552px;font-size:11px;color:#333;">J2</div>
<div class="t" style="left:876px;top:573px;font-size:11px;font-weight:bold;color:#d0403a;">Placement</div>
<div class="a" style="left:873px;top:590px;width:281px;height:1px;background:#b8b8b8;"></div>
<div class="t" style="left:876px;top:595px;font-size:11px;color:#444;">location</div>
<div class="a" style="left:941px;top:593px;width:58px;height:16px;background:#ececec;"></div>
<div class="a" style="left:983px;top:593px;width:16px;height:16px;background:#fff;"></div>
<svg class="a" style="left:985px;top:594px" width="12" height="14" viewBox="0 0 12 14"><path d="M2 6L6 2L10 6Z M2 8L6 12L10 8Z" fill="#999"/></svg>
<div class="t" style="left:943px;top:596px;font-size:11px;color:#222;">-1.000</div>
<div class="a" style="left:1006px;top:593px;width:59px;height:16px;background:#ececec;"></div>
<div class="a" style="left:1048px;top:593px;width:16px;height:16px;background:#fff;"></div>
<svg class="a" style="left:1050px;top:594px" width="12" height="14" viewBox="0 0 12 14"><path d="M2 6L6 2L10 6Z M2 8L6 12L10 8Z" fill="#999"/></svg>
<div class="t" style="left:1008px;top:596px;font-size:11px;color:#222;">0.350</div>
<div class="t" style="left:1068px;top:595px;font-size:11px;color:#222;">in</div>
<div class="a" style="left:873px;top:610px;width:281px;height:1px;background:#b8b8b8;"></div>
<div class="t" style="left:876px;top:615px;font-size:11px;color:#444;">rotation</div>
<div class="a" style="left:941px;top:613px;width:58px;height:16px;background:#ececec;"></div>
<div class="a" style="left:983px;top:613px;width:16px;height:16px;background:#fff;"></div>
<svg class="a" style="left:985px;top:614px" width="12" height="14" viewBox="0 0 12 14"><path d="M2 6L6 2L10 6Z M2 8L6 12L10 8Z" fill="#999"/></svg>
<div class="t" style="left:943px;top:616px;font-size:11px;color:#222;">180.0</div>
<div class="t" style="left:1006px;top:615px;font-size:11px;color:#222;">degrees</div>
<div class="a" style="left:873px;top:630px;width:281px;height:1px;background:#b8b8b8;"></div>
<svg class="a" style="left:940px;top:636px" width="12" height="10" viewBox="0 0 12 10"><path d="M11 0V9.5H0" stroke="#f4f4f4" stroke-width="1" fill="none"/></svg>
<div class="t" style="left:957px;top:636px;font-size:11px;color:#333;">Locked</div>
<div class="t" style="left:876px;top:657px;font-size:11px;font-weight:bold;color:#d0403a;">Properties</div>
<div class="a" style="left:873px;top:674px;width:281px;height:1px;background:#b8b8b8;"></div>
<div class="t" style="left:876px;top:680px;font-size:11px;color:#444;">family</div>
<div class="t" style="left:944px;top:680px;font-size:11px;color:#444;">Pin Header</div>
<div class="a" style="left:873px;top:696px;width:281px;height:1px;background:#b8b8b8;"></div>
<div class="t" style="left:876px;top:701px;font-size:11px;color:#444;">form</div>
<div class="a" style="left:941px;top:697px;width:213px;height:18px;background:#ececec;"></div>
<svg class="a" style="left:945px;top:702px" width="9" height="11" viewBox="0 0 9 11"><circle cx="4.5" cy="3.6" r="2.9" stroke="#222" stroke-width="1.1" fill="none"/><path d="M4.5 6.5V10.5M1.5 9H7.5" stroke="#222" stroke-width="1.1"/></svg><div class="t" style="left:955px;top:702px;font-size:11px;color:#222;">(female)</div>
<div class="a" style="left:873px;top:716px;width:281px;height:1px;background:#b8b8b8;"></div>
<div class="a" style="left:941px;top:717px;width:213px;height:18px;background:#ececec;"></div>
<div class="t" style="left:945px;top:722px;font-size:11px;color:#222;">Large (1.1mm/0.0433in)</div>
<!-- advanced settings groupbox -->
<svg class="a" style="left:940px;top:743px" width="214" height="83" viewBox="0 0 214 83"><path d="M10 1.5H1.5V83" stroke="#fff" stroke-width="1" fill="none"/><path d="M10 0.5H0.5V83" stroke="#a0a0a0" stroke-width="1" fill="none"/><path d="M106 0.5H214" stroke="#a0a0a0" stroke-width="1" fill="none"/><path d="M106 1.5H214" stroke="#fff" stroke-width="1" fill="none"/></svg>
<div class="t" style="left:950px;top:747px;font-size:11px;font-weight:bold;color:#111;">advanced settings</div>
<div class="t" style="left:876px;top:772px;font-size:11px;color:#444;">hole size</div>
<div class="t" style="left:954px;top:773px;font-size:11px;color:#444;">Hole Diameter</div>
<div class="a" style="left:1030px;top:768px;width:80px;height:21px;background:#ececec;"></div>
<div class="t" style="left:1033px;top:774px;font-size:11px;color:#222;">1.10</div>
<div class="t" style="left:954px;top:810px;font-size:11px;letter-spacing:-0.5px;color:#444;">Ring Thickness</div>
<div class="a" style="left:1030px;top:804px;width:80px;height:22px;background:#ececec;"></div>
<div class="t" style="left:1033px;top:810px;font-size:11px;color:#222;">0.51</div>
<svg class="a" style="left:1116px;top:766px" width="38" height="60" viewBox="0 0 38 60"><path d="M0.5 60V0.5H38" stroke="#a0a0a0" stroke-width="1" fill="none"/><path d="M1.5 60V1.5H38" stroke="#fff" stroke-width="1" fill="none"/><path d="M14 14V24.5H3" stroke="#f4f4f4" stroke-width="1" fill="none"/><path d="M5 49L8 52L14 45" stroke="#777" stroke-width="1" fill="none"/></svg>
<div class="t" style="left:1138px;top:788px;font-size:11px;color:#222;">in</div>
<div class="t" style="left:1138px;top:811px;font-size:11px;color:#222;">mm</div>
</body></html>
